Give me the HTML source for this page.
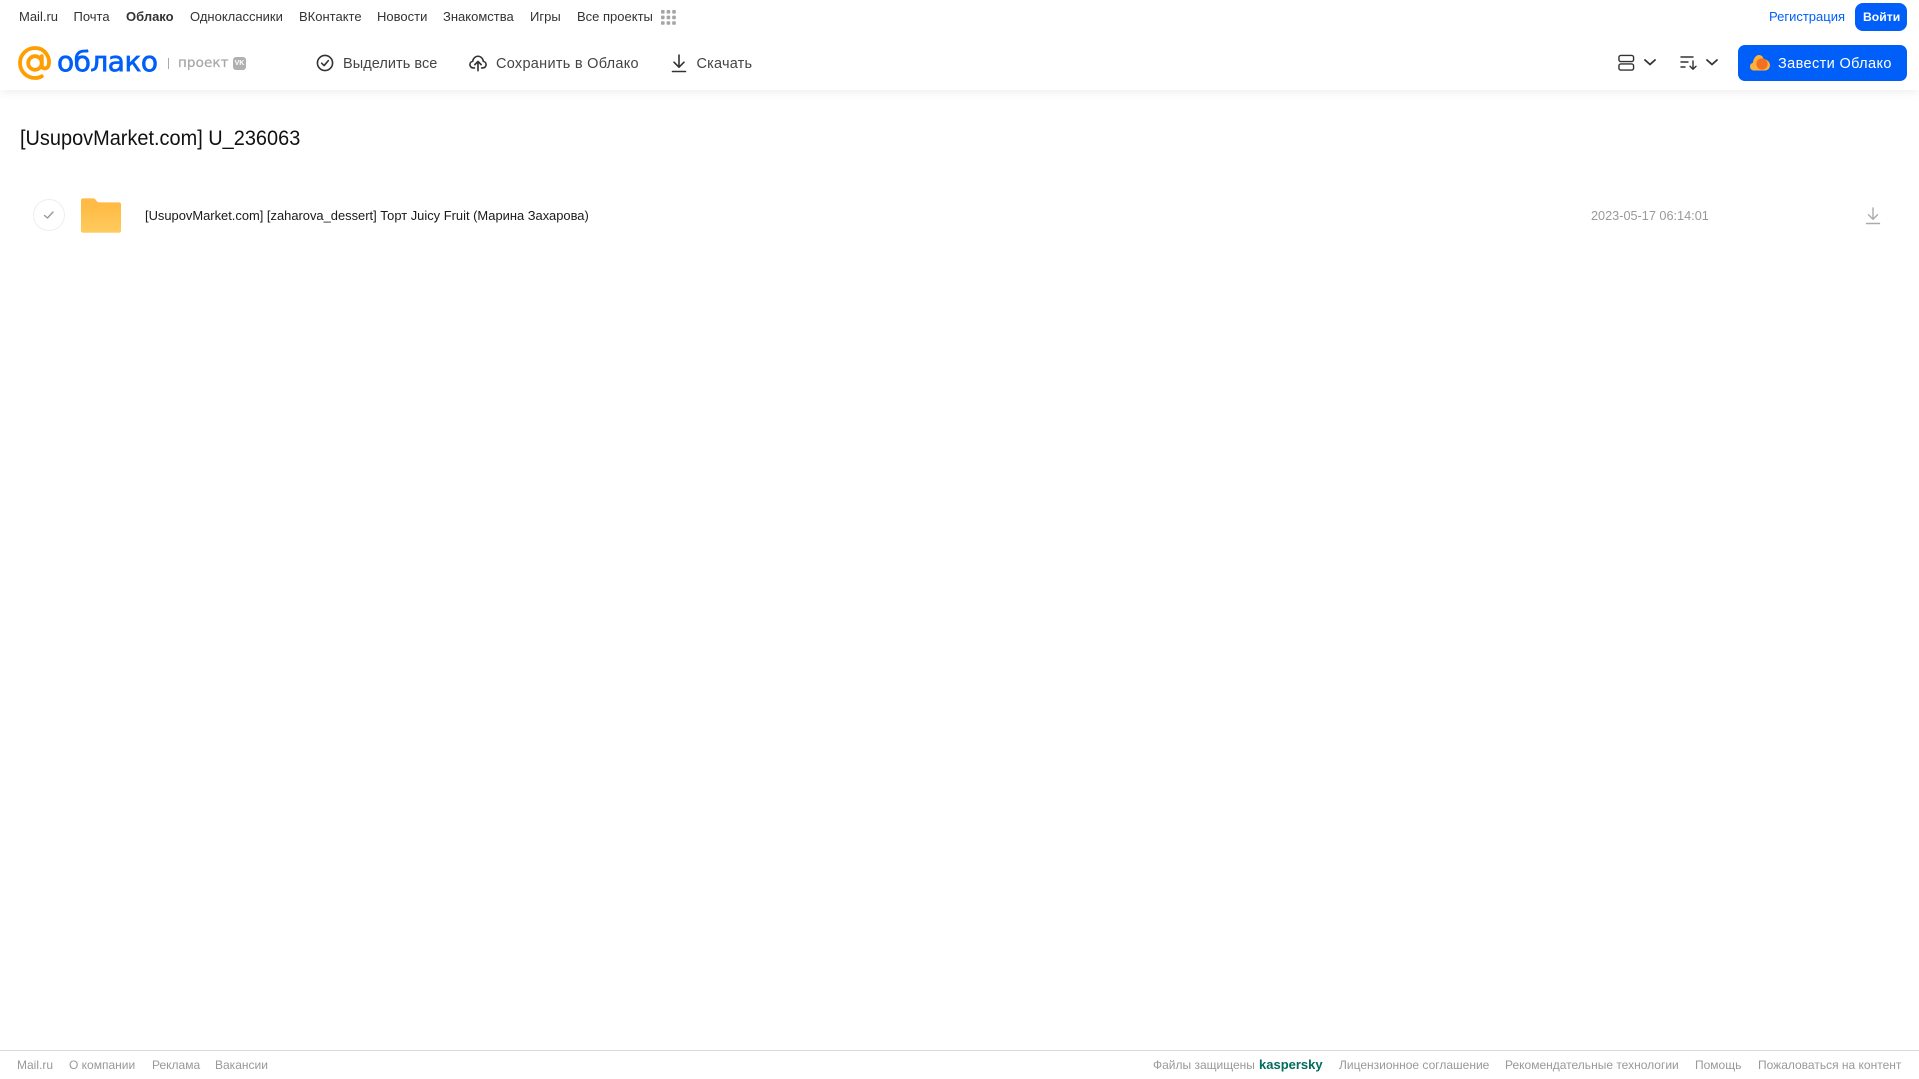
<!DOCTYPE html>
<html lang="ru">
<head>
<meta charset="utf-8">
<title>Облако</title>
<style>
html,body{margin:0;padding:0;background:#fff;width:1919px;height:1079px;overflow:hidden}
body{position:relative;font-family:"Liberation Sans",Arial,sans-serif;color:#333}
.t{position:absolute;white-space:nowrap;line-height:20px}
.n{top:7px;font-size:13px;color:#333}
.b{top:53.5px;font-size:14.5px;color:#444}
.f{top:1055px;font-size:12px;color:#999}
svg{position:absolute;display:block}
#head{position:absolute;left:0;top:0;width:1919px;height:90px;background:#fff;box-shadow:0 2px 10px rgba(0,0,0,.07)}
</style>
</head>
<body>
<div id="head"></div>

<span class="t n" style="left:19px">Mail.ru</span>
<span class="t n" style="left:73.5px">Почта</span>
<span class="t n" style="left:126px;font-weight:bold">Облако</span>
<span class="t n" style="left:190px">Одноклассники</span>
<span class="t n" style="left:299px">ВКонтакте</span>
<span class="t n" style="left:377px">Новости</span>
<span class="t n" style="left:443px">Знакомства</span>
<span class="t n" style="left:530px">Игры</span>
<span class="t n" style="left:577px">Все проекты</span>
<svg style="left:661px;top:10px" width="15" height="15" viewBox="0 0 15 15" fill="#a5a5a5">
<rect x="0" y="0" width="3.6" height="3.6" rx=".8"/><rect x="5.6" y="0" width="3.6" height="3.6" rx=".8"/><rect x="11.2" y="0" width="3.6" height="3.6" rx=".8"/>
<rect x="0" y="5.6" width="3.6" height="3.6" rx=".8"/><rect x="5.6" y="5.6" width="3.6" height="3.6" rx=".8"/><rect x="11.2" y="5.6" width="3.6" height="3.6" rx=".8"/>
<rect x="0" y="11.2" width="3.6" height="3.6" rx=".8"/><rect x="5.6" y="11.2" width="3.6" height="3.6" rx=".8"/><rect x="11.2" y="11.2" width="3.6" height="3.6" rx=".8"/>
</svg>

<span class="t n" style="left:1769px;color:#005ff9">Регистрация</span>
<div style="position:absolute;left:1855px;top:3px;width:52px;height:28px;border-radius:8px;background:#005ff9"></div>
<span class="t n" style="left:1863px;color:#fff;font-weight:bold;font-size:12.2px">Войти</span>

<!-- logo -->
<svg style="left:18px;top:46px" width="34" height="34" viewBox="0 0 34 34" fill="none" stroke="#ff9e00" stroke-width="3.8" stroke-linecap="round">
<circle cx="17" cy="17" r="6.8"/>
<path d="M23.8 10.2V19.5C23.8 23.4 29.4 23.4 30.6 19.4C32.6 11.8 27.2 2 17 2C8.7 2 2 8.7 2 17C2 25.3 8.7 32 17 32C19.6 32 21.8 31.4 23.8 30.3"/>
</svg>
<span class="t" style="left:57px;top:46px;font-family:'DejaVu Sans',sans-serif;font-size:28px;line-height:32px;color:#005ff9;-webkit-text-stroke:.7px #005ff9;letter-spacing:-.5px">облако</span>
<div style="position:absolute;left:168px;top:58px;width:1px;height:11px;background:#aaa"></div>
<span class="t" style="left:178px;top:53px;font-family:'DejaVu Sans',sans-serif;font-size:13.5px;color:#a8a8a8;-webkit-text-stroke:.25px #a8a8a8;letter-spacing:.1px">проект</span>
<div style="position:absolute;left:233px;top:57px;width:13px;height:13px;border-radius:3px;background:#b0b0b0;color:#fff;font-size:7px;font-weight:bold;line-height:13px;text-align:center">VK</div>

<!-- toolbar -->
<svg style="left:316px;top:54px" width="18" height="18" viewBox="0 0 19 19" fill="none" stroke="#333" stroke-width="1.7" stroke-linecap="round" stroke-linejoin="round">
<circle cx="9.5" cy="9.5" r="8"/><path d="M6 9.8L8.6 12.2L13 7"/>
</svg>
<span class="t b" style="left:343px;letter-spacing:.05px">Выделить все</span>

<svg style="left:469px;top:54px" width="18" height="18" viewBox="0 0 20 19" fill="none" stroke="#333" stroke-width="1.8" stroke-linecap="round" stroke-linejoin="round">
<path d="M6 15H4.8C2.7 15 1 13.4 1 11.3C1 9.5 2.3 8 4 7.7C4.5 4.4 7 2 10 2C13 2 15.5 4.4 16 7.7C17.7 8 19 9.5 19 11.3C19 13.4 17.3 15 15.2 15H14"/>
<path d="M10 18V8M6.5 11.3L10 7.8L13.5 11.3"/>
</svg>
<span class="t b" style="left:496px;letter-spacing:.28px">Сохранить в Облако</span>

<svg style="left:670px;top:54px" width="18" height="19" viewBox="0 0 18 19" fill="none" stroke="#333" stroke-width="1.6" stroke-linecap="round" stroke-linejoin="round">
<path d="M9 1V13M4 8.2L9 13.2L14 8.2M2.5 17.5H15.5"/>
</svg>
<span class="t b" style="left:696.5px;letter-spacing:.2px">Скачать</span>

<!-- right tools -->
<svg style="left:1618px;top:54px" width="17" height="18" viewBox="0 0 18 18" fill="none" stroke="#333" stroke-width="1.5">
<rect x="1" y="1" width="15.5" height="6.5" rx="2"/><rect x="1" y="10" width="15.5" height="6.5" rx="2"/>
</svg>
<svg style="left:1643px;top:58px" width="14" height="9" viewBox="0 0 14 9" fill="none" stroke="#333" stroke-width="1.8" stroke-linecap="round" stroke-linejoin="round"><path d="M2 2L7 6.5L12 2"/></svg>
<svg style="left:1680px;top:55px" width="18" height="16" viewBox="0 0 18 16" fill="none" stroke="#333" stroke-width="1.4" stroke-linecap="round" stroke-linejoin="round">
<path d="M1 2H13M1 7H8M1 12H5M13 6V14M10 11.2L13 14.2L16 11.2"/>
</svg>
<svg style="left:1705px;top:58px" width="14" height="9" viewBox="0 0 14 9" fill="none" stroke="#333" stroke-width="1.8" stroke-linecap="round" stroke-linejoin="round"><path d="M2 2L7 6.5L12 2"/></svg>

<div style="position:absolute;left:1738px;top:45px;width:169px;height:36px;border-radius:7px;background:#005ff9"></div>
<svg style="left:1750px;top:54px" width="20" height="18" viewBox="0 0 20 18">
<path d="M4 16.5C1.8 16.5 0 14.8 0 12.6C0 10.8 1.2 9.3 2.9 8.8C3.3 4.5 6 1 9 1C11.5 1 13 2.8 13.7 5C17 5.3 20 7.8 20 11.3C20 14.2 17.8 16.5 15 16.5Z" fill="#ffb13b"/>
<circle cx="12" cy="10" r="5.6" fill="#f2701f"/>
</svg>
<span class="t" style="left:1778px;top:53.5px;font-size:14.5px;color:#fff;letter-spacing:.38px">Завести Облако</span>

<!-- title -->
<span class="t" style="left:20px;top:124px;font-size:21.5px;line-height:28px;color:#111;transform:scaleX(.927);transform-origin:0 50%">[UsupovMarket.com] U_236063</span>

<!-- row -->
<div style="position:absolute;left:33px;top:199px;width:30px;height:30px;border:1px solid #eee;border-radius:50%"></div>
<svg style="left:43px;top:209px" width="12" height="12" viewBox="0 0 12 12" fill="none" stroke="#999" stroke-width="1.4" stroke-linecap="round" stroke-linejoin="round"><path d="M1.5 6.5L4.5 9L10 3"/></svg>
<svg style="left:81px;top:198px" width="40" height="35" viewBox="0 0 41 35">
<defs><linearGradient id="g" x1="0" y1="0" x2="0" y2="1"><stop offset="0" stop-color="#ffbb45"/><stop offset="1" stop-color="#ffcb5e"/></linearGradient></defs>
<path d="M2 0H12C14 0 15 1 16 2.5C16.8 3.7 17.5 4 19 4H39C40.2 4 41 4.8 41 6V33C41 34.2 40.2 35 39 35H2C.8 35 0 34.2 0 33V2C0 .8.8 0 2 0Z" fill="#ffbb45"/>
<rect x="0" y="8" width="41" height="27" rx="2" fill="url(#g)"/>
</svg>
<span class="t" style="left:145px;top:206px;font-size:12.92px;color:#1a1a1a">[UsupovMarket.com] [zaharova_dessert] Торт Juicy Fruit (Марина Захарова)</span>
<span class="t" style="left:1591px;top:206px;font-size:12.7px;color:#999">2023-05-17 06:14:01</span>
<svg style="left:1865px;top:207px" width="16" height="18" viewBox="0 0 16 18" fill="none" stroke="#aaa" stroke-width="1.4" stroke-linecap="round" stroke-linejoin="round">
<path d="M8 1V12M3.5 7.8L8 12.2L12.5 7.8M1.5 16.5H14.5"/>
</svg>

<!-- footer -->
<div style="position:absolute;left:0;top:1050px;width:1919px;height:1px;background:#d9d9d9"></div>
<span class="t f" style="left:17px">Mail.ru</span>
<span class="t f" style="left:69px">О компании</span>
<span class="t f" style="left:152px">Реклама</span>
<span class="t f" style="left:215px">Вакансии</span>
<span class="t f" style="left:1153px">Файлы защищены</span>
<span class="t f" style="left:1259px;font-size:13px;font-weight:bold;color:#006d5c">kaspersky</span>
<span class="t f" style="left:1339px">Лицензионное соглашение</span>
<span class="t f" style="left:1505px">Рекомендательные технологии</span>
<span class="t f" style="left:1695px">Помощь</span>
<span class="t f" style="left:1758px">Пожаловаться на контент</span>
</body>
</html>
